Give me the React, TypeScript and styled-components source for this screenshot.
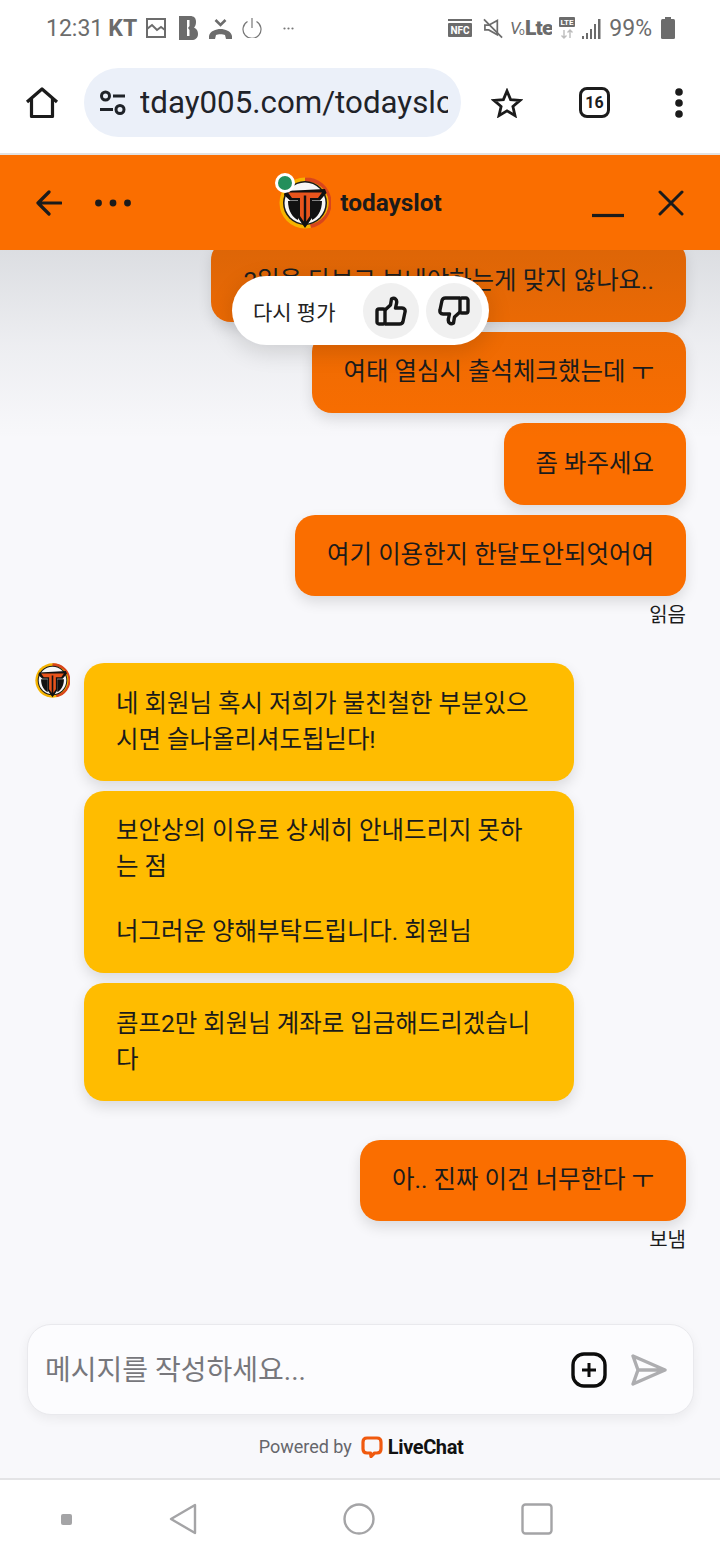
import React from "react";
import styled, { createGlobalStyle } from "styled-components";

const GlobalStyle = createGlobalStyle`
  html, body {
    margin: 0;
    padding: 0;
    background: #fff;
    font-family: Roboto, "Noto Sans CJK KR", sans-serif;
  }
`;

const Page = styled.div`
  width: 720px;
  height: 1560px;
  display: flex;
  flex-direction: column;
  overflow: hidden;
`;

const StatusBar = styled.div`
  height: 55px;
  flex: none;
  display: flex;
  align-items: center;
  justify-content: space-between;
  padding: 1px 45px 0 46px;
  color: #6c6c6c;
  font-size: 23px;
  box-sizing: border-box;
`;

const StatusGroup = styled.div`
  display: flex;
  align-items: center;
`;

const Carrier = styled.span`
  font-weight: 700;
  margin: 0 9px 0 5px;
`;

const Percent = styled.span`
  margin-left: 6px;
`;

const BrowserBar = styled.div`
  height: 100px;
  flex: none;
  display: flex;
  align-items: center;
  padding: 0 0 3px 25px;
  box-sizing: border-box;
  border-bottom: 2px solid #e2e2e2;
`;

const UrlPill = styled.div`
  width: 377px;
  height: 69px;
  flex: none;
  margin-left: 25px;
  padding: 0 13px 0 15px;
  box-sizing: border-box;
  display: flex;
  align-items: center;
  gap: 13px;
  border-radius: 35px;
  background: #ebf0f9;
  color: #1f2329;
  font-size: 31.3px;
  overflow: hidden;
  white-space: nowrap;
`;

const UrlText = styled.span`
  overflow: hidden;
`;

const TabCount = styled.div`
  width: 25px;
  height: 25px;
  margin-left: 56px;
  border: 3px solid #1c1c1c;
  border-radius: 8px;
  display: flex;
  align-items: center;
  justify-content: center;
  font-size: 16px;
  font-weight: 700;
  color: #1c1c1c;
`;

const ChatHeader = styled.header`
  height: 95px;
  flex: none;
  position: relative;
  z-index: 2;
  display: flex;
  align-items: center;
  justify-content: space-between;
  padding: 0 36px;
  box-sizing: border-box;
  background: #fa6e00;
  color: #1b1b1b;
`;

const HeaderSide = styled.div`
  display: flex;
  align-items: center;
  gap: ${(p: { $gap: number }) => p.$gap}px;
`;

const Brand = styled.div`
  display: flex;
  align-items: center;
  gap: 9px;
  margin-left: -2px;
  font-size: 24.4px;
  font-weight: 700;
  position: relative;
`;

const OnlineDot = styled.span`
  position: absolute;
  left: -4px;
  top: -4px;
  width: 14px;
  height: 14px;
  border: 3px solid #fff;
  border-radius: 50%;
  background: #248f5b;
`;

const ChatBody = styled.main`
  flex: 1;
  min-height: 0;
  position: relative;
  display: flex;
  flex-direction: column;
  background: #f8f8fb;
  overflow: hidden;
`;

const TopShade = styled.div`
  position: absolute;
  left: 0;
  right: 0;
  top: 0;
  height: 190px;
  background: linear-gradient(rgba(30, 45, 55, 0.13), rgba(30, 45, 55, 0.05) 50%, rgba(30, 45, 55, 0));
  pointer-events: none;
`;

const Messages = styled.div`
  flex: 1;
  min-height: 0;
  display: flex;
  flex-direction: column;
  justify-content: flex-end;
  padding: 0 34px 73px 35px;
`;

const OwnGroup = styled.div`
  display: flex;
  flex-direction: column;
  align-items: flex-end;
  gap: 10px;
  margin-bottom: ${(p: { $after: number }) => p.$after}px;
  flex: none;
`;

const OwnBubble = styled.div`
  padding: 22.5px 32px 23px;
  border-radius: 20px;
  background: #fa6e00;
  color: #1b1b1b;
  font-size: 24.45px;
  line-height: 36px;
  box-shadow: 0 6px 14px rgba(0, 0, 0, 0.12);
  white-space: nowrap;
`;

const Receipt = styled.div`
  margin-top: -2px;
  font-size: 20px;
  line-height: 22px;
  color: #1b1b1b;
`;

const AgentRow = styled.div`
  display: flex;
  gap: 14px;
  margin-bottom: 39px;
  flex: none;
`;

const AgentBubbles = styled.div`
  display: flex;
  flex-direction: column;
  gap: 10px;
`;

const AgentBubble = styled.div`
  width: 490px;
  padding: 22.5px 32px 23px;
  box-sizing: border-box;
  border-radius: 20px;
  background: #ffbc00;
  color: #1b1b1b;
  font-size: 24.45px;
  line-height: 36px;
  box-shadow: 0 6px 14px rgba(0, 0, 0, 0.12);
`;

const Paragraph = styled.p`
  margin: 0 0 29px;
  &:last-child {
    margin-bottom: 0;
  }
`;

const RatingPill = styled.div`
  position: absolute;
  left: 232px;
  top: 26px;
  width: 257px;
  height: 69px;
  padding: 0 7px 0 21px;
  box-sizing: border-box;
  display: flex;
  align-items: center;
  border-radius: 35px;
  background: #fff;
  box-shadow: 0 6px 24px rgba(0, 0, 0, 0.14);
  color: #222;
  font-size: 21px;
  white-space: nowrap;
`;

const RatingLabel = styled.span`
  width: 110px;
  flex: none;
`;

const RateButton = styled.div`
  width: 56px;
  height: 56px;
  flex: none;
  margin-left: ${(p: { $left: number }) => p.$left}px;
  display: flex;
  align-items: center;
  justify-content: center;
  border-radius: 50%;
  background: #f0f0f0;
`;

const Composer = styled.div`
  flex: none;
  height: 91px;
  margin: 0 26px 0 27px;
  padding: 0 26px 0 17px;
  box-sizing: border-box;
  display: flex;
  align-items: center;
  border: 1px solid #e9e9ed;
  border-radius: 24px;
  background: #fcfcfe;
  box-shadow: 0 4px 12px rgba(0, 0, 0, 0.06);
`;

const Placeholder = styled.div`
  flex: 1;
  color: #77777c;
  font-size: 28px;
  margin-top: -4px;
`;

const Powered = styled.div`
  flex: none;
  height: 63px;
  display: flex;
  align-items: center;
  justify-content: center;
  gap: 9px;
  color: #66666b;
  font-size: 18px;
  box-sizing: border-box;
  padding-left: 2px;
`;

const LiveChatName = styled.span`
  color: #111;
  font-size: 20px;
  font-weight: 700;
  letter-spacing: -0.4px;
  margin-left: -4px;
`;

const NavBar = styled.nav`
  height: 82px;
  flex: none;
  display: flex;
  align-items: center;
  padding: 0 0 2px 61px;
  box-sizing: border-box;
  background: #fff;
  border-top: 2px solid #e4e4e6;
`;

const NavDot = styled.span`
  width: 11px;
  height: 11px;
  border-radius: 2px;
  background: #a4a4a6;
  margin-right: 97px;
`;

const NavSlot = styled.div`
  display: flex;
  margin-right: ${(p: { $after: number }) => p.$after}px;
`;

const Logo = ({ size }: { size: number }) => (
  <svg width={size} height={size} viewBox="0 0 52 52">
    <circle cx="26" cy="26" r="25.500" fill="#f6b400" />
    <path d="M26 0.500 A25.500 25.500 0 0 1 32 51 L31 47 A21 21 0 0 0 26 5 Z" fill="#d8451c" />
    <circle cx="26" cy="26" r="22" fill="#1a1a1a" />
    <circle cx="26" cy="26" r="20.500" fill="#f7f7f7" />
    <path d="M9 24 H19 V43 C14 41 9 34 9 24 Z M43 24 H33 V43 C38 41 43 34 43 24 Z" fill="#111" />
    <path d="M6 14 L46 12 L47.500 16 L41 23.500 L33 23.500 L33 41 L26 51 L19 41 L19 23.500 L11 23.500 L5 18 Z" fill="#111" />
    <path d="M9 15.500 H43 L39 21 H31 V39 L27.200 44.500 V18.500 H24.800 V44.500 L21 39 V21 H13 Z" fill="#e8541c" />
  </svg>
);

const ThumbIcon = ({ flip }: { flip?: boolean }) => (
  <svg width="32" height="30" viewBox="0 0 32 30" fill="none" stroke="#161616" strokeWidth="3.400" strokeLinejoin="round">
    <g transform={flip ? "rotate(180 16 15)" : undefined}>
      <rect x="2" y="13" width="8" height="15" rx="2" />
      <path d="M10 14 L15.500 9 L16.500 3 C19.500 1 22.500 3.500 21.500 7.500 L20.500 12 H27 C29.500 12 30.500 14 30 16 L28 25.500 C27.500 27.500 26.500 28 24.500 28 H10" />
    </g>
  </svg>
);

const App = () => {
  return (
    <Page>
      <GlobalStyle />
      <StatusBar>
        <StatusGroup>
          <span>12:31</span>
          <Carrier>KT</Carrier>
          <svg width="20" height="20" viewBox="0 0 20 20" fill="none" stroke="#6c6c6c" strokeWidth="2">
            <rect x="1" y="1" width="18" height="18" />
            <path d="M1 11 L6 7 L11 12 L15 9 L19 12" />
          </svg>
          <svg width="19" height="24" viewBox="0 0 19 24" style={{ marginLeft: 13 }}>
            <path d="M0 0 H11 C15 0 17 2 17 6 C17 9 16 10.500 15 11.500 C17 12.500 19 14 19 18 C19 22 16 24 13 24 H0 Z" fill="#6c6c6c" />
            <path d="M8 4 H10.500 V10 L9 12 L10.500 14 V20 H8 Z" fill="#fff" />
          </svg>
          <svg width="23" height="21" viewBox="0 0 23 21" style={{ marginLeft: 11 }}>
            <path d="M0 18 C1 13 7 11 11.500 11 C16 11 22 13 23 18 V21 H17 L16 17 C14 16 9 16 7 17 L6 21 H0 Z" fill="#6c6c6c" />
            <path d="M6.500 2 L11.500 7 L16.500 2" fill="none" stroke="#6c6c6c" strokeWidth="2.600" />
          </svg>
          <svg width="20" height="20" viewBox="0 0 20 20" fill="none" stroke="#777" strokeWidth="1.200" style={{ marginLeft: 10 }}>
            <path d="M5.500 3.500 A9 9 0 1 0 14.500 3.500" />
            <path d="M10 0 V10" />
          </svg>
          <svg width="11" height="3" viewBox="0 0 11 3" fill="#777" style={{ marginLeft: 21 }}>
            <circle cx="1.500" cy="1.500" r="1.100" />
            <circle cx="5.500" cy="1.500" r="1.100" />
            <circle cx="9.500" cy="1.500" r="1.100" />
          </svg>
        </StatusGroup>
        <StatusGroup>
          <svg width="24" height="18" viewBox="0 0 24 18">
            <rect x="0" y="0" width="24" height="2" fill="#6c6c6c" />
            <rect x="0" y="4" width="24" height="14" rx="1" fill="#6c6c6c" />
            <text x="12" y="15" fontSize="10" fontWeight="700" fill="#fff" textAnchor="middle" fontFamily="Roboto">NFC</text>
          </svg>
          <svg width="21" height="21" viewBox="0 0 22 21" fill="none" stroke="#6c6c6c" strokeWidth="1.800" style={{ marginLeft: 11 }}>
            <path d="M2 7 H6 L15 2 V17 L6 12 H2 Z" />
            <path d="M1 1 L20 20" />
          </svg>
          <svg width="42" height="20" viewBox="0 0 42 20" style={{ marginLeft: 6 }}>
            <text x="0" y="16" fontSize="17" fontStyle="italic" fill="#6c6c6c" fontFamily="Roboto">V</text>
            <text x="9" y="17" fontSize="10" fill="#6c6c6c" fontFamily="Roboto">o</text>
            <text x="15" y="16.500" fontSize="21" fontWeight="900" fill="#6c6c6c" fontFamily="Roboto" letterSpacing="-0.800">Lte</text>
          </svg>
          <svg width="16" height="22" viewBox="0 0 16 22" style={{ marginLeft: 7 }}>
            <rect x="0" y="0" width="16" height="10" rx="1" fill="#6c6c6c" />
            <text x="8" y="8" fontSize="8" fontWeight="700" fill="#fff" textAnchor="middle" fontFamily="Roboto">LTE</text>
            <path d="M5 13 V21 M2.500 18.500 L5 21 L7.500 18.500 M11 21 V13 M8.500 15.500 L11 13 L13.500 15.500" fill="none" stroke="#bdbdbd" strokeWidth="1.400" />
          </svg>
          <svg width="21" height="21" viewBox="0 0 21 21" fill="#6c6c6c" style={{ marginLeft: 7 }}>
            <rect x="0" y="18" width="2" height="3" />
            <rect x="4" y="15" width="2" height="6" />
            <rect x="8" y="11" width="2" height="10" />
            <rect x="12" y="6" width="2" height="15" />
            <rect x="16" y="1" width="2.500" height="20" />
          </svg>
          <Percent>99%</Percent>
          <svg width="14" height="22" viewBox="0 0 14 22" fill="#6c6c6c" style={{ marginLeft: 9 }}>
            <rect x="4" y="0" width="6" height="2" />
            <rect x="0" y="2" width="14" height="20" rx="1.500" />
          </svg>
        </StatusGroup>
      </StatusBar>
      <BrowserBar>
        <svg width="34" height="32" viewBox="0 0 34 32" fill="none" stroke="#1b1b1b" strokeWidth="3.200" strokeLinejoin="round">
          <path d="M2 15 L17 2 L32 15 M6.500 12 V29.500 H27.500 V12" />
        </svg>
        <UrlPill>
          <svg width="28" height="26" viewBox="0 0 28 26" fill="none" stroke="#1f2329" strokeWidth="3" style={{ flex: "none" }}>
            <circle cx="6.500" cy="6" r="4" />
            <path d="M14 6 H26" />
            <circle cx="21" cy="19.500" r="4" />
            <path d="M1 19.500 H14" />
          </svg>
          <UrlText>tday005.com/todayslot</UrlText>
        </UrlPill>
        <svg width="32" height="30" viewBox="0 0 32 30" fill="none" stroke="#1b1b1b" strokeWidth="2.800" style={{ marginLeft: 30 }}>
          <path d="M16 3 L19.600 11.600 L29 12.400 L21.900 18.500 L24 27.600 L16 22.800 L8 27.600 L10.100 18.500 L3 12.400 L12.400 11.600 Z" />
        </svg>
        <TabCount>16</TabCount>
        <svg width="12" height="30" viewBox="0 0 12 30" fill="#1b1b1b" style={{ marginLeft: 63 }}>
          <circle cx="6" cy="4" r="3.800" />
          <circle cx="6" cy="15" r="3.800" />
          <circle cx="6" cy="26" r="3.800" />
        </svg>
      </BrowserBar>
      <ChatHeader>
        <HeaderSide $gap={33}>
          <svg width="26" height="26" viewBox="0 0 26 26" fill="none" stroke="#1b1b1b" strokeWidth="3.200" strokeLinecap="round" strokeLinejoin="round">
            <path d="M25 13 H2 M13 2 L2 13 L13 24" />
          </svg>
          <svg width="36" height="8" viewBox="0 0 36 8" fill="#1b1b1b">
            <circle cx="3.500" cy="4" r="3.400" />
            <circle cx="18" cy="4" r="3.400" />
            <circle cx="32.500" cy="4" r="3.400" />
          </svg>
        </HeaderSide>
        <Brand>
          <OnlineDot />
          <Logo size={52} />
          todayslot
        </Brand>
        <HeaderSide $gap={34}>
          <svg width="32" height="26" viewBox="0 0 32 26" fill="none" stroke="#1b1b1b" strokeWidth="3.200" style={{ marginTop: 6 }}>
            <path d="M0 22.500 H32" />
          </svg>
          <svg width="26" height="26" viewBox="0 0 26 26" fill="none" stroke="#1b1b1b" strokeWidth="3" strokeLinecap="round">
            <path d="M2 2 L24 24 M24 2 L2 24" />
          </svg>
        </HeaderSide>
      </ChatHeader>
      <ChatBody>
        <Messages>
          <OwnGroup $after={37}>
            <OwnBubble>2일을 다보고 보내야하는게 맞지 않나요..</OwnBubble>
            <OwnBubble>여태 열심시 출석체크했는데 ㅜ</OwnBubble>
            <OwnBubble>좀 봐주세요</OwnBubble>
            <OwnBubble>여기 이용한지 한달도안되엇어여</OwnBubble>
            <Receipt>읽음</Receipt>
          </OwnGroup>
          <AgentRow>
            <Logo size={35} />
            <AgentBubbles>
              <AgentBubble>네 회원님 혹시 저희가 불친철한 부분있으시면 슬나올리셔도됩닏다!</AgentBubble>
              <AgentBubble>
                <Paragraph>보안상의 이유로 상세히 안내드리지 못하는 점</Paragraph>
                <Paragraph>너그러운 양해부탁드립니다. 회원님</Paragraph>
              </AgentBubble>
              <AgentBubble>콤프2만 회원님 계좌로 입금해드리겠습니다</AgentBubble>
            </AgentBubbles>
          </AgentRow>
          <OwnGroup $after={0}>
            <OwnBubble>아.. 진짜 이건 너무한다 ㅜ</OwnBubble>
            <Receipt>보냄</Receipt>
          </OwnGroup>
        </Messages>
        <TopShade />
        <RatingPill>
          <RatingLabel>다시 평가</RatingLabel>
          <RateButton $left={0}>
            <ThumbIcon />
          </RateButton>
          <RateButton $left={7}>
            <ThumbIcon flip />
          </RateButton>
        </RatingPill>
        <Composer>
          <Placeholder>메시지를 작성하세요...</Placeholder>
          <svg width="36" height="36" viewBox="0 0 36 36" fill="none" stroke="#0c0c0c" style={{ marginRight: 24 }}>
            <rect x="2" y="2" width="32" height="32" rx="11" strokeWidth="3.400" />
            <path d="M18 11 V25 M11 18 H25" strokeWidth="3" />
          </svg>
          <svg width="36" height="32" viewBox="0 0 36 32" fill="none" stroke="#adadb0" strokeWidth="3.400" strokeLinejoin="round">
            <path d="M2 2 L34 16 L2 30 L7 16 Z M7 16 H34" />
          </svg>
        </Composer>
        <Powered>
          <span>Powered by</span>
          <svg width="22" height="22" viewBox="0 0 22 22" fill="none">
            <path d="M6 2 H16 C18.500 2 20 3.500 20 6 V13 C20 15.500 18.500 17 16 17 H13.500 L10 20.500 L9.500 17 H6 C3.500 17 2 15.500 2 13 V6 C2 3.500 3.500 2 6 2 Z" stroke="#f0590e" strokeWidth="3.200" strokeLinejoin="round" />
          </svg>
          <LiveChatName>LiveChat</LiveChatName>
        </Powered>
      </ChatBody>
      <NavBar>
        <NavDot />
        <NavSlot $after={146}>
          <svg width="28" height="32" viewBox="0 0 28 32" fill="none" stroke="#a4a4a6" strokeWidth="2.400" strokeLinejoin="round">
            <path d="M26 2 V30 L2 16 Z" />
          </svg>
        </NavSlot>
        <NavSlot $after={146}>
          <svg width="32" height="32" viewBox="0 0 32 32" fill="none" stroke="#a4a4a6" strokeWidth="2.400">
            <circle cx="16" cy="16" r="14.500" />
          </svg>
        </NavSlot>
        <NavSlot $after={0}>
          <svg width="32" height="32" viewBox="0 0 32 32" fill="none" stroke="#a4a4a6" strokeWidth="2.400">
            <rect x="1.500" y="1.500" width="29" height="29" rx="3" />
          </svg>
        </NavSlot>
      </NavBar>
    </Page>
  );
};

export default App;
